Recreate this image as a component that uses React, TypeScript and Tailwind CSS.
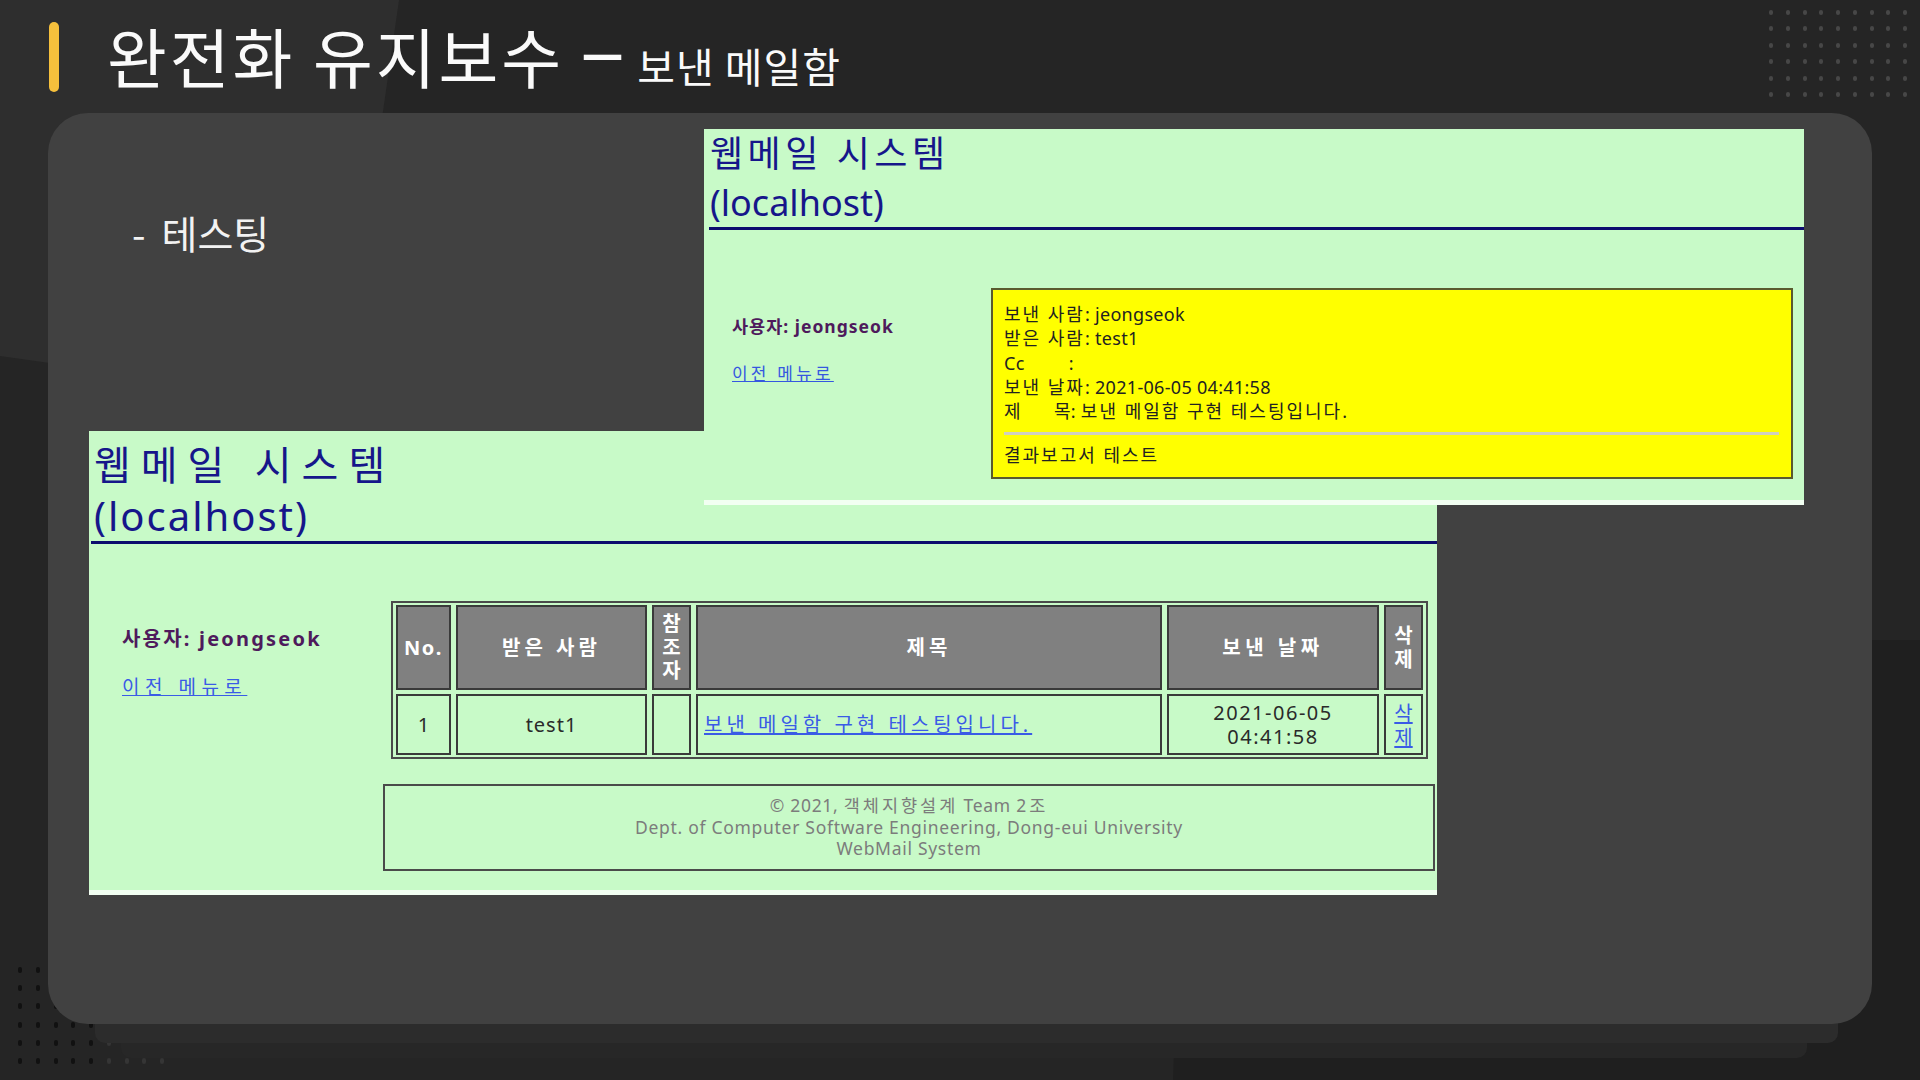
import React from "react";

const webFont = "font-['Noto_Sans','Noto_Sans_CJK_KR',sans-serif]";

function DotGrid({ rows, cols, className, dotClass }: { rows: number; cols: number; className: string; dotClass: (r: number, c: number) => string }) {
  return (
    <div className={className}>
      {Array.from({ length: rows * cols }).map((_, i) => (
        <div key={i} className={dotClass(Math.floor(i / cols), i % cols)} />
      ))}
    </div>
  );
}

function Ko({ children }: { children: React.ReactNode }) {
  return <span className="tracking-[2px]">{children}</span>;
}

function SentMailView() {
  return (
    <div className={`absolute left-[656px] top-[16px] h-[376px] w-[1100px] border-b-[5px] border-[#f2fff2] bg-[#c8fac8] ${webFont}`}>
      <h1 className="pl-[6px] text-[36px] font-normal leading-[49px] text-[#16168a]">
        <span className="tracking-[4.5px]">웹메일 시스템</span>
        <br />
        <span>(localhost)</span>
      </h1>
      <div className="ml-[5px] h-[3px] bg-[#0c0c6e]" />
      <div className="flex items-start">
        <div className="w-[287px] pl-[28px] pt-[84px]">
          <p className="text-[17.5px] font-bold leading-[24px] tracking-[1px] text-[#4e1a5c]">사용자: jeongseok</p>
          <p className="mt-[24px] text-[17px] leading-[24px] tracking-[3.2px] text-[#3557e0] underline">이전 메뉴로</p>
        </div>
        <div className="mt-[58px] h-[191px] w-[802px] border-2 border-[#5a5a2e] bg-[#ffff00] pl-[11px] pr-[12px] pt-[12px] text-[18px] leading-[24.3px] tracking-[0.3px] text-[#222]">
          <p>
            <Ko>보낸 사람</Ko>: jeongseok
          </p>
          <p>
            <Ko>받은 사람</Ko>: test1
          </p>
          <p>
            Cc<span className="ml-[44px]">:</span>
          </p>
          <p>
            <Ko>보낸 날짜</Ko>: 2021-06-05 04:41:58
          </p>
          <p>
            제
            <span className="ml-[33px]">
              목: <Ko>보낸 메일함 구현 테스팅입니다</Ko>.
            </span>
          </p>
          <div className="mt-[9px] h-[3px] bg-[#cfcfc0]" />
          <p className="mt-[8px]">
            <Ko>결과보고서 테스트</Ko>
          </p>
        </div>
      </div>
    </div>
  );
}

function HeadCell({ children, className = "" }: { children: React.ReactNode; className?: string }) {
  return (
    <div className={`flex items-center justify-center border-2 border-[#3a3a3a] bg-[#808080] text-[20px] font-bold text-white ${className}`}>
      {children}
    </div>
  );
}

function BodyCell({ children, className = "" }: { children?: React.ReactNode; className?: string }) {
  return <div className={`flex items-center border-2 border-[#3a3a3a] text-[20px] text-[#2a2a2a] ${className}`}>{children}</div>;
}

function MailboxView() {
  return (
    <div className={`absolute left-[41px] top-[318px] h-[464px] w-[1348px] border-b-[5px] border-[#f2fff2] bg-[#c8fac8] ${webFont}`}>
      <h1 className="pl-[5px] pt-[8px] text-[40px] font-normal leading-[51px] text-[#16168a]">
        <span className="tracking-[10px]">웹메일 시스템</span>
        <br />
        <span className="tracking-[2px]">(localhost)</span>
      </h1>
      <div className="ml-[2px] h-[3px] bg-[#0c0c6e]" />
      <div className="flex items-start">
        <div className="w-[302px] shrink-0 pl-[33px] pt-[82px]">
          <p className="text-[20px] font-bold leading-[26px] tracking-[2.2px] text-[#4e1a5c]">사용자: jeongseok</p>
          <p className="mt-[22px] text-[19px] leading-[26px] tracking-[5.5px] text-[#3a5be6] underline">이전 메뉴로</p>
        </div>
        <div className="pt-[57px]">
          <div className="grid h-[158px] w-[1037px] grid-cols-[55px_191px_39px_466px_212px_39px] grid-rows-[85px_61px] gap-x-[5px] gap-y-[4px] border-2 border-[#4a4a4a] px-[3px] py-[2px]">
            <HeadCell className="tracking-[1.5px]">No.</HeadCell>
            <HeadCell className="tracking-[4px]">받은 사람</HeadCell>
            <HeadCell className="flex-col text-[18px] leading-[23.5px]">
              <span>참</span>
              <span>조</span>
              <span>자</span>
            </HeadCell>
            <HeadCell className="tracking-[4px]">제목</HeadCell>
            <HeadCell className="tracking-[4.5px]">보낸 날짜</HeadCell>
            <HeadCell className="flex-col text-[18px] leading-[23.5px]">
              <span>삭</span>
              <span>제</span>
            </HeadCell>

            <BodyCell className="justify-center">1</BodyCell>
            <BodyCell className="justify-center tracking-[1px]">test1</BodyCell>
            <BodyCell />
            <BodyCell className="pl-[6px]">
              <span className="text-[20px] tracking-[4px] text-[#3a5be6] underline">보낸 메일함 구현 테스팅입니다.</span>
            </BodyCell>
            <BodyCell className="flex-col justify-center leading-[24px] tracking-[1.5px]">
              <span>2021-06-05</span>
              <span>04:41:58</span>
            </BodyCell>
            <BodyCell className="flex-col justify-center pt-[2px] text-[18px] leading-[23.5px] text-[#3a5be6]">
              <span className="underline">삭</span>
              <span className="underline">제</span>
            </BodyCell>
          </div>
          <div className="ml-[-8px] mt-[25px] h-[87px] w-[1052px] border-2 border-[#4a4a4a] pt-[9px] text-center text-[17.5px] leading-[21.5px] tracking-[0.7px] text-[#7c7c7c]">
            <p>
              © 2021, <span className="tracking-[3px]">객체지향설계</span> Team <span className="tracking-[3px]">2조</span>
            </p>
            <p>Dept. of Computer Software Engineering, Dong-eui University</p>
            <p>WebMail System</p>
          </div>
        </div>
      </div>
    </div>
  );
}

export default function App() {
  return (
    <div className="relative h-[1080px] w-[1920px] overflow-hidden bg-[#252525] font-['Noto_Sans_CJK_KR',sans-serif]">
      {/* background shapes */}
      <div className="absolute inset-0 bg-[#2e2e2e] [clip-path:polygon(0_0,399px_0,341px_404px,0_356px)]" />
      <div className="absolute inset-0 bg-[#1f1f1f] [clip-path:polygon(1190px_640px,1920px_640px,1920px_1080px,1173px_1080px)]" />

      <DotGrid
        rows={6}
        cols={9}
        className="absolute left-[1769px] top-[10px] grid grid-cols-[repeat(9,4px)] gap-x-[12.75px] gap-y-[11.4px]"
        dotClass={() => "h-[5px] w-[4px] rounded-full bg-[#474747]"}
      />
      <DotGrid
        rows={6}
        cols={9}
        className="absolute left-[18px] top-[967px] grid grid-cols-[repeat(9,4px)] gap-x-[13.75px] gap-y-[12.2px]"
        dotClass={(r, c) => `h-[6px] w-[4px] rounded-full ${r >= 3 && c >= 5 ? "bg-[#353535]" : "bg-[#111111]"}`}
      />

      {/* stacked sheets under the card */}
      <div className="absolute left-[121px] top-[900px] h-[158px] w-[1686px] rounded-b-[10px] bg-[#272727]" />
      <div className="absolute left-[95px] top-[900px] h-[143px] w-[1743px] rounded-b-[10px] bg-[#2c2c2c]" />

      <header className="relative flex h-[113px] items-start pl-[49px] pt-[22px]">
        <div className="h-[70px] w-[10px] rounded-full bg-[#f6c03c]" />
        <div className="ml-[48px] mt-[-7px] flex items-baseline text-[#fafafa]">
          <span className="text-[65px] leading-[80px] tracking-[3px]">완전화 유지보수</span>
          <span className="ml-[22px] inline-block -translate-y-[8px] scale-x-[1.35] font-['Noto_Sans',sans-serif] text-[66px] leading-[80px]">–</span>
          <span className="ml-[18px] text-[41px] leading-[50px] tracking-[1px]">보낸 메일함</span>
        </div>
      </header>

      <main className="relative ml-[48px] h-[911px] w-[1824px] rounded-[40px] bg-[#414141] pl-[84px] pt-[97px]">
        <p className="text-[39px] leading-[44px] text-[#f2f2f2]">
          -<span className="ml-[16px]">테스팅</span>
        </p>
        <MailboxView />
        <SentMailView />
      </main>
    </div>
  );
}
